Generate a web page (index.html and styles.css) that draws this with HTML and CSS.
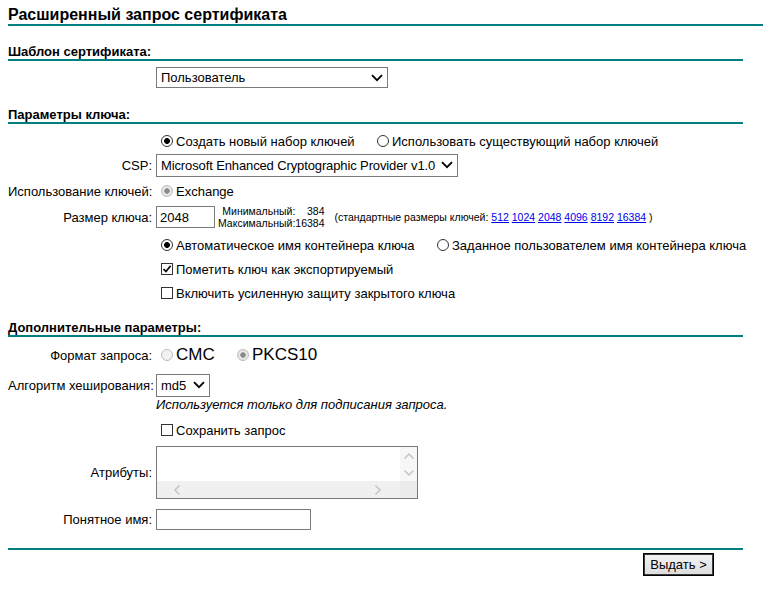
FILE: index.html
```html
<!DOCTYPE html>
<html lang="ru">
<head>
<meta charset="utf-8">
<title>Расширенный запрос сертификата</title>
<link rel="stylesheet" href="styles.css">
</head>
<body>
<div class="page">
  <h1 class="title">Расширенный запрос сертификата</h1>

  <section class="sec sec-tpl">
    <h2 class="sec-head">Шаблон сертификата:</h2>
    <div class="row row-tpl">
      <span class="lbl"></span>
      <div class="ctl">
        <span class="sel sel-tpl">
          <select><option>Пользователь</option></select>
          <svg class="chev" width="12" height="8" viewBox="0 0 12 8"><polyline points="1,1.2 6,6.2 11,1.2" fill="none" stroke="#000" stroke-width="1.8"/></svg>
        </span>
      </div>
    </div>
  </section>

  <section class="sec sec-key">
    <h2 class="sec-head">Параметры ключа:</h2>
    <div class="row r-new">
      <span class="lbl"></span>
      <div class="ctl">
        <label class="opt opt-new"><input type="radio" name="ks" checked>Создать новый набор ключей</label>
        <label class="opt"><input type="radio" name="ks">Использовать существующий набор ключей</label>
      </div>
    </div>
    <div class="row r-csp">
      <span class="lbl">CSP:</span>
      <div class="ctl">
        <span class="sel sel-csp">
          <select><option>Microsoft Enhanced Cryptographic Provider v1.0</option></select>
          <svg class="chev" width="12" height="8" viewBox="0 0 12 8"><polyline points="1,1.2 6,6.2 11,1.2" fill="none" stroke="#000" stroke-width="1.8"/></svg>
        </span>
      </div>
    </div>
    <div class="row r-use">
      <span class="lbl">Использование ключей:</span>
      <div class="ctl">
        <label class="opt"><input type="radio" name="ku" checked disabled>Exchange</label>
      </div>
    </div>
    <div class="row r-size">
      <span class="lbl">Размер ключа:</span>
      <div class="ctl size-ctl">
        <input class="txt txt-size" type="text" value="2048">
        <div class="minmax">
          <span class="mm-l">Минимальный:</span><span class="mm-v">384</span>
          <span class="mm-l">Максимальный:</span><span class="mm-v">16384</span>
        </div>
        <span class="std">(стандартные размеры ключей: <a href="#">512</a> <a href="#">1024</a> <a href="#">2048</a> <a href="#">4096</a> <a href="#">8192</a> <a href="#">16384</a> )</span>
      </div>
    </div>
    <div class="row r-cont">
      <span class="lbl"></span>
      <div class="ctl">
        <label class="opt opt-auto"><input type="radio" name="kc" checked>Автоматическое имя контейнера ключа</label>
        <label class="opt"><input type="radio" name="kc">Заданное пользователем имя контейнера ключа</label>
      </div>
    </div>
    <div class="row r-chk">
      <span class="lbl"></span>
      <div class="ctl">
        <label class="opt chk"><input type="checkbox" checked><svg class="tick" width="12" height="12" viewBox="0 0 12 12"><polyline points="2.5,6 5,8.6 9.6,2.8" fill="none" stroke="#000" stroke-width="1.6"/></svg>Пометить ключ как экспортируемый</label>
      </div>
    </div>
    <div class="row r-chk">
      <span class="lbl"></span>
      <div class="ctl">
        <label class="opt chk"><input type="checkbox">Включить усиленную защиту закрытого ключа</label>
      </div>
    </div>
  </section>

  <section class="sec sec-more">
    <h2 class="sec-head">Дополнительные параметры:</h2>
    <div class="row r-fmt">
      <span class="lbl">Формат запроса:</span>
      <div class="ctl">
        <label class="opt big opt-cmc"><input type="radio" name="fmt" disabled>CMC</label>
        <label class="opt big"><input type="radio" name="fmt" checked disabled>PKCS10</label>
      </div>
    </div>
    <div class="row r-hash">
      <span class="lbl">Алгоритм хеширования:</span>
      <div class="ctl">
        <span class="sel sel-md5">
          <select><option>md5</option></select>
          <svg class="chev" width="12" height="8" viewBox="0 0 12 8"><polyline points="1,1.2 6,6.2 11,1.2" fill="none" stroke="#000" stroke-width="1.8"/></svg>
        </span>
      </div>
    </div>
    <div class="row r-note">
      <span class="lbl"></span>
      <div class="ctl"><em class="note">Используется только для подписания запроса.</em></div>
    </div>
    <div class="row r-save">
      <span class="lbl"></span>
      <div class="ctl">
        <label class="opt chk"><input type="checkbox">Сохранить запрос</label>
      </div>
    </div>
    <div class="row r-attr">
      <span class="lbl">Атрибуты:</span>
      <div class="ctl">
        <div class="ta">
          <textarea class="ta-in"></textarea>
          <div class="vbar">
            <svg width="12" height="8" viewBox="0 0 12 8"><polyline points="1.5,6.5 6,2 10.5,6.5" fill="none" stroke="#c4c4c4" stroke-width="1.5"/></svg>
            <svg width="12" height="8" viewBox="0 0 12 8"><polyline points="1.5,1.5 6,6 10.5,1.5" fill="none" stroke="#c4c4c4" stroke-width="1.5"/></svg>
          </div>
          <div class="hbar">
            <svg width="8" height="12" viewBox="0 0 8 12"><polyline points="6.5,1.5 2,6 6.5,10.5" fill="none" stroke="#c4c4c4" stroke-width="1.5"/></svg>
            <svg width="8" height="12" viewBox="0 0 8 12"><polyline points="1.5,1.5 6,6 1.5,10.5" fill="none" stroke="#c4c4c4" stroke-width="1.5"/></svg>
          </div>
          <div class="corner"></div>
        </div>
      </div>
    </div>
    <div class="row r-name">
      <span class="lbl">Понятное имя:</span>
      <div class="ctl"><input class="txt txt-name" type="text"></div>
    </div>
    <div class="foot">
      <button class="btn" type="button">Выдать &gt;</button>
    </div>
  </section>
</div>
</body>
</html>
```

FILE: styles.css
```css
html, body {
  margin: 0;
  background: #fff;
}
body {
  font-family: "Liberation Sans", Arial, sans-serif;
  font-size: 13px;
  color: #000;
}
.page {
  padding: 6px 0 0 8px;
}
.title {
  margin: 0;
  font-size: 16px;
  font-weight: bold;
  line-height: 18px;
  border-bottom: 2px solid #008080;
}
.sec {
  width: 735px;
}
.sec-head {
  margin: 0;
  font-size: 13px;
  font-weight: bold;
  line-height: 15px;
  border-bottom: 2px solid #008080;
}
.sec-tpl { margin-top: 18px; }
.sec-key { margin-top: 19px; }
.sec-more { margin-top: 15px; }

.row {
  display: grid;
  grid-template-columns: 144px 1fr;
  column-gap: 4px;
  align-items: center;
  height: 24px;
}
.lbl {
  text-align: right;
  white-space: nowrap;
}
.ctl {
  display: flex;
  align-items: center;
  white-space: nowrap;
}

.row-tpl { margin-top: 6px; height: 21px; }
.r-new { margin-top: 5px; }
.r-csp { margin-top: 0; }
.r-use { margin-top: 2px; }
.r-size { margin-top: 2px; }
.r-cont { margin-top: 4px; }
.r-fmt { margin-top: 6px; }
.r-hash { margin-top: 6px; }
.r-note { height: 15px; }
.r-save { margin-top: 6px; }
.r-attr { margin-top: 4px; height: 53px; }
.r-name { margin-top: 10px; height: 21px; }

/* selects */
.sel {
  position: relative;
  display: inline-block;
}
.sel select {
  appearance: none;
  -webkit-appearance: none;
  display: block;
  box-sizing: border-box;
  border: 1px solid #7a7a7a;
  border-radius: 0;
  background: #fff;
  color: #000;
  font-family: "Liberation Sans", Arial, sans-serif;
  font-size: 13px;
  padding: 0 12px 0 4px;
  margin: 0;
  outline: none;
}
.sel .chev {
  position: absolute;
  right: 5px;
  top: 50%;
  margin-top: -4px;
  pointer-events: none;
  background: #fff;
}
.sel-tpl select { width: 232px; height: 21px; }
.sel-csp select { width: 302px; height: 23px; letter-spacing: -0.12px; }
.sel-md5 select { width: 54px; height: 23px; }

/* radios & checkboxes */
.opt {
  position: relative;
  display: inline-flex;
  align-items: center;
}
.opt input {
  appearance: none;
  -webkit-appearance: none;
  box-sizing: border-box;
  width: 12px;
  height: 12px;
  margin: 0 3px 0 5px;
  border: 1px solid #333;
  background: #fff;
  flex: none;
}
.opt input[type="radio"] {
  border-radius: 50%;
}
.opt input[type="radio"]:checked {
  background: radial-gradient(circle, #000 0 2.6px, #fff 3.2px);
}
.opt input[type="radio"]:disabled {
  border-color: #bcbcbc;
  background: #f2f2f2;
}
.opt input[type="radio"]:disabled:checked {
  background: radial-gradient(circle, #8a8a8a 0 2.4px, #e6e6e6 3px);
}
.opt input[type="checkbox"] {
  border-radius: 0;
}
.chk .tick {
  position: absolute;
  left: 5px;
  top: 50%;
  margin-top: -6px;
  pointer-events: none;
}
.opt-new { width: 216px; }
.opt-auto { width: 276px; }
.opt-cmc { width: 76px; }
.big {
  font-size: 17px;
}

/* text inputs */
.txt {
  box-sizing: border-box;
  border: 1px solid #7a7a7a;
  border-radius: 0;
  margin: 0;
  padding: 1px 3px;
  font-family: "Liberation Sans", Arial, sans-serif;
  font-size: 13px;
  color: #000;
  outline: none;
}
.txt-size { width: 59px; height: 22px; }
.txt-name { width: 155px; height: 21px; }

.size-ctl {
  align-items: center;
}
.minmax {
  display: grid;
  grid-template-columns: auto auto;
  margin-left: 3px;
  font-size: 10.5px;
  line-height: 12px;
}
.mm-l { text-align: right; }
.mm-v { text-align: right; }
.std {
  margin-left: 10px;
  font-size: 10.5px;
}
.std a {
  color: #0000ee;
  text-decoration: underline;
}

.note {
  font-style: italic;
}

/* textarea with scrollbars */
.ta {
  box-sizing: border-box;
  width: 262px;
  height: 53px;
  border: 1px solid #7a7a7a;
  display: grid;
  grid-template-columns: 1fr 17px;
  grid-template-rows: 1fr 17px;
  background: #fff;
}
.ta-in {
  border: 0;
  margin: 0;
  padding: 0;
  resize: none;
  outline: none;
  overflow: hidden;
  background: #fff;
  min-width: 0;
}
.vbar {
  background: #f7f7f7;
  display: flex;
  flex-direction: column;
  align-items: center;
  justify-content: space-around;
}
.hbar {
  background: #f0f0f0;
  display: flex;
  align-items: center;
  justify-content: space-between;
  padding: 0 18px 0 16px;
}
.corner {
  background: #ebebeb;
}

/* footer */
.foot {
  margin-top: 18px;
  border-top: 2px solid #008080;
  padding-top: 3px;
  padding-right: 29px;
  display: flex;
  justify-content: flex-end;
}
.btn {
  box-sizing: border-box;
  width: 71px;
  height: 23px;
  margin: 0;
  padding: 0;
  border: 1px solid #000;
  box-shadow: inset 0 0 0 1px #3c3c3c;
  border-radius: 0;
  background: linear-gradient(#f4f4f4, #dcdcdc);
  font-family: "Liberation Sans", Arial, sans-serif;
  font-size: 13px;
  color: #000;
}
```
